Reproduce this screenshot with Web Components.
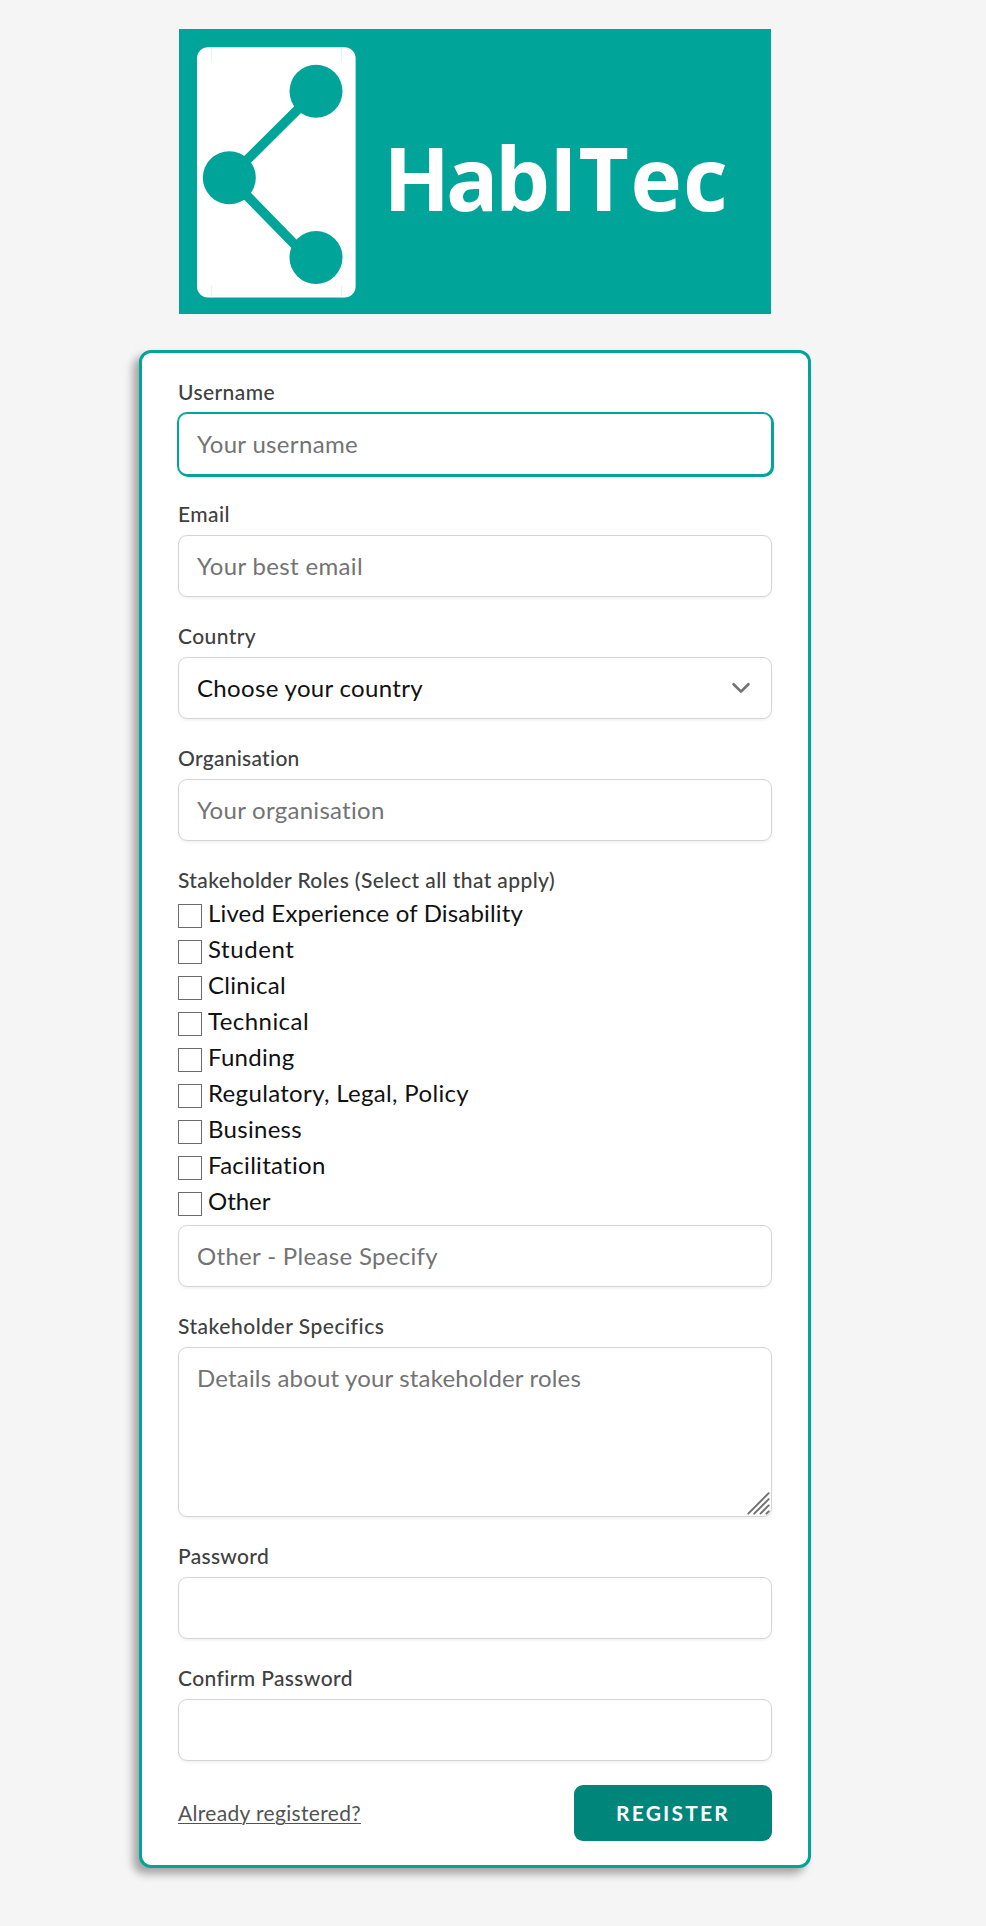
<!DOCTYPE html>
<html lang="en">
<head>
<meta charset="utf-8">
<title>HabITec – Register</title>
<style>
html{background:#f5f5f5}
body{margin:0;background:#f5f5f5;font-family:Lato,"Liberation Sans",sans-serif;color:#111}
</style>
</head>
<body>
<register-page></register-page>
<script>
const define=(name,html,setup)=>customElements.define(name,class extends HTMLElement{
  connectedCallback(){
    if(this.shadowRoot)return;
    const t=document.createElement('template');
    t.innerHTML=html;
    this.attachShadow({mode:'open'}).append(t.content.cloneNode(true));
    if(setup)setup(this,this.shadowRoot);
  }
});

/* Tracks its text so that the line takes the width given in w. */
define('fit-text',`<style>:host{display:inline-block;white-space:nowrap}span{display:inline-block}:host([underline]) span{text-decoration:underline;text-decoration-thickness:1px;text-underline-offset:2px}</style><span></span>`,(el,root)=>{
  const s=root.querySelector('span');
  s.textContent=el.getAttribute('t');
  const w=parseFloat(el.getAttribute('w'));
  const d=w-s.getBoundingClientRect().width;
  s.style.letterSpacing=(d/s.textContent.length)+'px';
});

define('brand-banner',`<style>
:host{display:block;width:592px;height:285px;background:#00a499}
svg{display:block}
text{font:700 87px "Open Sans","Noto Sans",sans-serif;fill:#fff}
</style>
<svg width="592" height="285" viewBox="0 0 592 285">
<rect x="18" y="18.2" width="158.6" height="250.2" rx="11" fill="#fff"/>
<path d="M32.4 19v14M162.4 19v14M32.4 256.500v12M162.400 256.500v12" stroke="#d9f1ef" stroke-width=".8"/>
<path d="M137 62.300L50.300 148.700L124.300 224.300" fill="none" stroke="#00a499" stroke-width="9.600"/>
<g fill="#00a499"><circle cx="137" cy="62.300" r="26.500"/><circle cx="50.300" cy="148.700" r="26.500"/><circle cx="137" cy="228.400" r="26.500"/></g>
<text y="182" x="204.500 267 316 370 399.500 451.500 504">HabITec</text>
</svg>`);

define('form-card',`<style>
:host{display:flex;flex-direction:column;box-sizing:border-box;width:672px;height:1518px;padding:24px 36px;background:#fff;border:3px solid #00a499;border-radius:12px;box-shadow:-6px 6px 9px rgba(0,0,0,.33)}
</style><slot></slot>`);

define('form-field',`<style>
:host{display:block;margin-bottom:24px}
.label{display:block;height:30px;line-height:30px;margin-bottom:6px;font-size:21px;font-weight:500;color:#404040}
:host([tight]) .label{margin-bottom:1px}
</style><div class="label"></div><slot></slot>`,(el,root)=>{
  root.querySelector('.label').innerHTML=`<fit-text t="${el.getAttribute('label')}" w="${el.getAttribute('w')}"></fit-text>`;
});

define('text-box',`<style>
:host{display:block;position:relative;box-sizing:border-box;height:62px;padding:12px 18px;border:1px solid #d4d4d4;border-radius:9px;background:#fff;box-shadow:0 1.500px 3px rgba(0,0,0,.05);font-size:24px;line-height:36px;color:#737373}
:host([focused]){border-color:#00a499;box-shadow:0 0 0 1px #00a499,1px 1px 0 1px #00a499}
:host([dark]){color:#111}
:host([tall]){height:170px}
</style><slot></slot>`);

define('chevron-icon',`<style>:host{position:absolute;right:18px;top:18px;width:24px;height:24px}svg{display:block}</style>
<svg width="24" height="24" viewBox="0 0 24 24"><path d="M4.600 8.300L12 15.600L19.400 8.300" fill="none" stroke="#737373" stroke-width="2.700" stroke-linecap="round" stroke-linejoin="round"/></svg>`);

define('resize-grip',`<style>:host{position:absolute;right:-1px;bottom:-1px;width:25px;height:25px}svg{display:block}</style>
<svg width="25" height="25" viewBox="0 0 25 25"><path d="M1.300 21.600L21.700 1.200M7.200 21.600L21.700 7.100M13.500 21.600L21.700 13.400M19.400 21.600L21.700 19.300" stroke="#6f6f6f" stroke-width="1.900" stroke-linecap="round"/></svg>`);

define('check-row',`<style>
:host{display:flex;height:36px;align-items:flex-start;font-size:24px;line-height:34px;color:#111}
i{box-sizing:border-box;width:24px;height:24px;margin:8px 6px 0 0;border:1px solid #6b6b6b;background:#fff}
</style><i></i><slot></slot>`);

define('form-actions',`<style>
:host{display:flex;justify-content:space-between;align-items:center;height:56px}
a{font-size:21px;line-height:30px;color:#525252}
button{width:198px;height:56px;padding:0;border:0;border-radius:9px;background:#00857a;color:#fff;font:700 21px/30px Lato,sans-serif}
</style><a><fit-text underline t="Already registered?" w="183"></fit-text></a><button><fit-text t="REGISTER" w="114"></fit-text></button>`);

const T=(t,w)=>`<fit-text t="${t}" w="${w}"></fit-text>`;
const roles=[['Lived Experience of Disability',315],['Student',86.500],['Clinical',78],['Technical',101],['Funding',86.500],['Regulatory, Legal, Policy',261],['Business',94],['Facilitation',118],['Other',62.500]];
define('register-page',`<style>
:host{display:flex;flex-direction:column;align-items:center;gap:36px;box-sizing:border-box;width:950px;height:1926px;padding-top:29px}
.other{margin-top:5px}
</style>
<brand-banner></brand-banner>
<form-card>
<form-field label="Username" w="97"><text-box focused>${T('Your username',161)}</text-box></form-field>
<form-field label="Email" w="52"><text-box>${T('Your best email',166)}</text-box></form-field>
<form-field label="Country" w="78"><text-box dark>${T('Choose your country',226)}<chevron-icon></chevron-icon></text-box></form-field>
<form-field label="Organisation" w="122"><text-box>${T('Your organisation',188)}</text-box></form-field>
<form-field tight label="Stakeholder Roles (Select all that apply)" w="377">${roles.map(r=>`<check-row>${T(...r)}</check-row>`).join('')}<text-box class="other">${T('Other - Please Specify',241)}</text-box></form-field>
<form-field label="Stakeholder Specifics" w="206"><text-box tall>${T('Details about your stakeholder roles',384)}<resize-grip></resize-grip></text-box></form-field>
<form-field label="Password" w="91"><text-box></text-box></form-field>
<form-field label="Confirm Password" w="174.500"><text-box></text-box></form-field>
<form-actions></form-actions>
</form-card>`);
</script>
</body>
</html>
